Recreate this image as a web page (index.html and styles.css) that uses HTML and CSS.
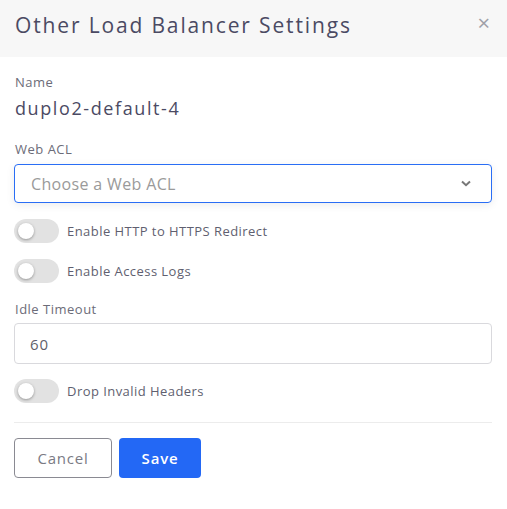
FILE: index.html
```
<!DOCTYPE html>
<html>
<head>
<meta charset="utf-8">
<link rel="stylesheet" href="styles.css">
</head>
<body>
<div class="modal">
  <div class="header">
    <div class="title">Other Load Balancer Settings</div>
    <div class="close">×</div>
  </div>
  <div class="body">
    <div class="label">Name</div>
    <div class="value">duplo2-default-4</div>
    <div class="label label-acl">Web ACL</div>
    <div class="select">
      <span class="placeholder">Choose a Web ACL</span>
      <svg class="chev" width="10" height="7" viewBox="0 0 10 7"><path d="M1 1.5 L5 5.2 L9 1.5" fill="none" stroke="#777" stroke-width="2"/></svg>
    </div>
    <div class="toggle-row t1"><span class="switch"><span class="knob"></span></span><span class="tlabel">Enable HTTP to HTTPS Redirect</span></div>
    <div class="toggle-row t2"><span class="switch"><span class="knob"></span></span><span class="tlabel">Enable Access Logs</span></div>
    <div class="label label-idle">Idle Timeout</div>
    <div class="input">60</div>
    <div class="toggle-row t3"><span class="switch"><span class="knob"></span></span><span class="tlabel">Drop Invalid Headers</span></div>
    <div class="divider"></div>
    <div class="buttons">
      <button class="btn cancel">Cancel</button>
      <button class="btn save">Save</button>
    </div>
  </div>
</div>
</body>
</html>
```
FILE: styles.css
```
html, body { margin: 0; padding: 0; background: #fff; }
body { font-family: "Open Sans", "DejaVu Sans", sans-serif; color: #4a4a5e; }
.modal { width: 507px; }
.header { background: #f7f7f7; height: 57px; display: flex; align-items: center; justify-content: space-between; padding: 0 15px; box-sizing: border-box; }
.title { font-size: 21px; color: #4b4a63; letter-spacing: 1.85px; margin-top: -8px; }
.close { font-size: 22px; color: #a0a0a8; margin-right: 2px; margin-top: -14px; }
.body { padding: 16px 15px 0 14px; }
.label { font-size: 13px; color: #6c6c78; line-height: 18px; margin-left: 1px; letter-spacing: 0.5px; }
.value { font-size: 18px; color: #4b4a63; margin-top: 5px; line-height: 24px; margin-left: 1px; letter-spacing: 1.6px; }
.label-acl { margin-top: 20px; }
.select { margin-top: 6px; height: 39px; border: 1px solid #2a6ef5; border-radius: 4px; box-sizing: border-box; display: flex; align-items: center; justify-content: space-between; padding: 0 20px 0 16px; box-shadow: 0 2px 8px rgba(0,0,0,0.08); }
.placeholder { font-size: 16px; color: #9a9a9a; letter-spacing: 0.35px; }
.toggle-row { display: flex; align-items: center; gap: 8px; }
.t1 { margin-top: 16px; }
.t2 { margin-top: 16px; }
.t3 { margin-top: 15px; }
.switch { width: 45px; height: 24px; border-radius: 12px; background: #e2e2e2; position: relative; display: inline-block; }
.knob { position: absolute; left: 4px; top: 4px; width: 16px; height: 16px; border-radius: 50%; background: #fff; box-shadow: 0 1px 3px rgba(0,0,0,0.35); }
.tlabel { font-size: 13px; color: #5f5f70; letter-spacing: 0.45px; }
.label-idle { margin-top: 17px; }
.input { margin-top: 5px; height: 41px; border: 1px solid #d9d9dd; border-radius: 4px; box-sizing: border-box; display: flex; align-items: center; padding-left: 15px; font-size: 15px; color: #5f5f6a; letter-spacing: 0.8px; }
.divider { margin-top: 19px; height: 1px; background: #ececec; }
.buttons { display: flex; gap: 7px; margin-top: 15px; }
.btn { height: 40px; border-radius: 4px; font-family: inherit; font-size: 15px; box-sizing: border-box; letter-spacing: 0.8px; }
.cancel { width: 98px; background: #fff; border: 1px solid #8a8a92; color: #7a7a84; }
.save { width: 82px; background: #2368f5; border: none; color: #fff; font-weight: 600; }
```
